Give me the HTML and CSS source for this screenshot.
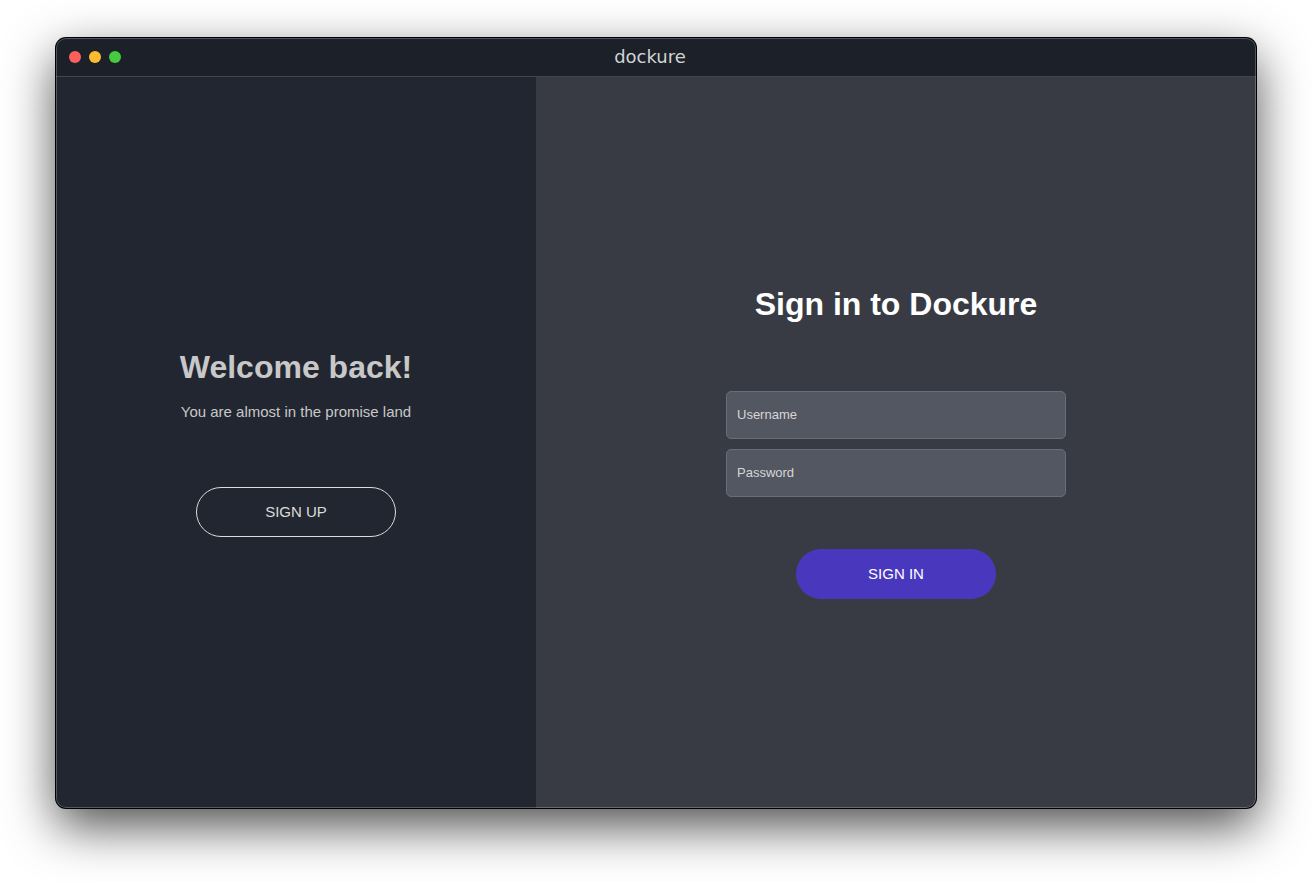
FILE: index.html
```html
<!DOCTYPE html>
<html lang="en">
<head>
<meta charset="utf-8">
<title>dockure</title>
<link rel="stylesheet" href="styles.css">
</head>
<body>
<div class="window">
  <header class="titlebar">
    <div class="controls">
      <button class="dot dot-close" type="button" aria-label="Close"></button>
      <button class="dot dot-minimize" type="button" aria-label="Minimize"></button>
      <button class="dot dot-zoom" type="button" aria-label="Zoom"></button>
    </div>
    <span class="brand">dockure</span>
  </header>
  <main class="panels">
    <section class="panel welcome">
      <h1 class="heading">Welcome back!</h1>
      <p class="tagline">You are almost in the promise land</p>
      <button class="pill pill-outline" type="button">SIGN UP</button>
    </section>
    <section class="panel signin">
      <h2 class="heading">Sign in to Dockure</h2>
      <form class="form">
        <div class="fields">
          <input class="field" type="text" placeholder="Username" aria-label="Username">
          <input class="field" type="password" placeholder="Password" aria-label="Password">
        </div>
        <button class="pill pill-solid" type="button">SIGN IN</button>
      </form>
    </section>
  </main>
</div>
</body>
</html>
```
FILE: styles.css
```css
* {
  box-sizing: border-box;
}

body {
  margin: 0;
  padding: 38px 56px 74px;
  min-height: 100vh;
  display: flex;
  background: #fff;
  font-family: "Liberation Sans", Arial, sans-serif;
}

.window {
  position: relative;
  flex: 1;
  display: flex;
  flex-direction: column;
  border-radius: 10px;
  overflow: hidden;
  background: #222630;
  box-shadow: 0 0 0 1px #000, 0 18px 50px rgba(0, 0, 0, 0.7);
}

/* Light inner rim along the window edge */
.window::after {
  content: "";
  position: absolute;
  inset: 0;
  border: 1px solid rgba(255, 255, 255, 0.24);
  border-radius: 10px;
  pointer-events: none;
}

.titlebar {
  display: grid;
  grid-template-columns: 1fr auto 1fr;
  align-items: center;
  height: 39px;
  padding: 0 25px 0 13px;
  background: #1c2028;
  border-bottom: 1px solid #43464f;
}

.controls {
  display: flex;
  gap: 8px;
}

.dot {
  width: 12px;
  height: 12px;
  padding: 0;
  border: 0;
  border-radius: 50%;
}

.dot-close {
  background: #fc605c;
}

.dot-minimize {
  background: #fdbc2f;
}

.dot-zoom {
  background: #46cb3f;
}

.brand {
  font-family: "DejaVu Sans", sans-serif;
  font-size: 18px;
  line-height: 20px;
  color: #d2d3d4;
}

.panels {
  flex: 1;
  display: grid;
  grid-template-columns: 2fr 3fr;
}

.panel {
  display: flex;
  flex-direction: column;
  align-items: center;
  justify-content: center;
}

.welcome {
  background: #222630;
  color: #c8c8c8;
}

.signin {
  background: #393b44;
  color: #fff;
}

.heading {
  margin: 0;
  font-size: 32px;
  line-height: 36px;
  font-weight: 700;
}

.tagline {
  margin: 18px 0 66px;
  font-size: 15px;
  line-height: 18px;
}

.pill {
  width: 200px;
  height: 50px;
  padding: 0;
  border-radius: 25px;
  font-family: inherit;
  font-size: 15px;
  line-height: 18px;
}

.pill-outline {
  border: 1px solid #dcdcdc;
  background: transparent;
  color: #dcdcdc;
}

.pill-solid {
  border: 0;
  background: #4938be;
  color: #fff;
}

.form {
  width: 340px;
  margin-top: 69px;
  display: flex;
  flex-direction: column;
  align-items: center;
  gap: 52px;
}

.fields {
  width: 100%;
  display: flex;
  flex-direction: column;
  gap: 10px;
}

.field {
  width: 100%;
  height: 48px;
  padding: 0 10px 2px;
  border: 1px solid #696c7c;
  border-radius: 5px;
  background: #535761;
  color: #fff;
  font-family: inherit;
  font-size: 13px;
}

.field::placeholder {
  color: #d6d6d6;
  opacity: 1;
}
```
